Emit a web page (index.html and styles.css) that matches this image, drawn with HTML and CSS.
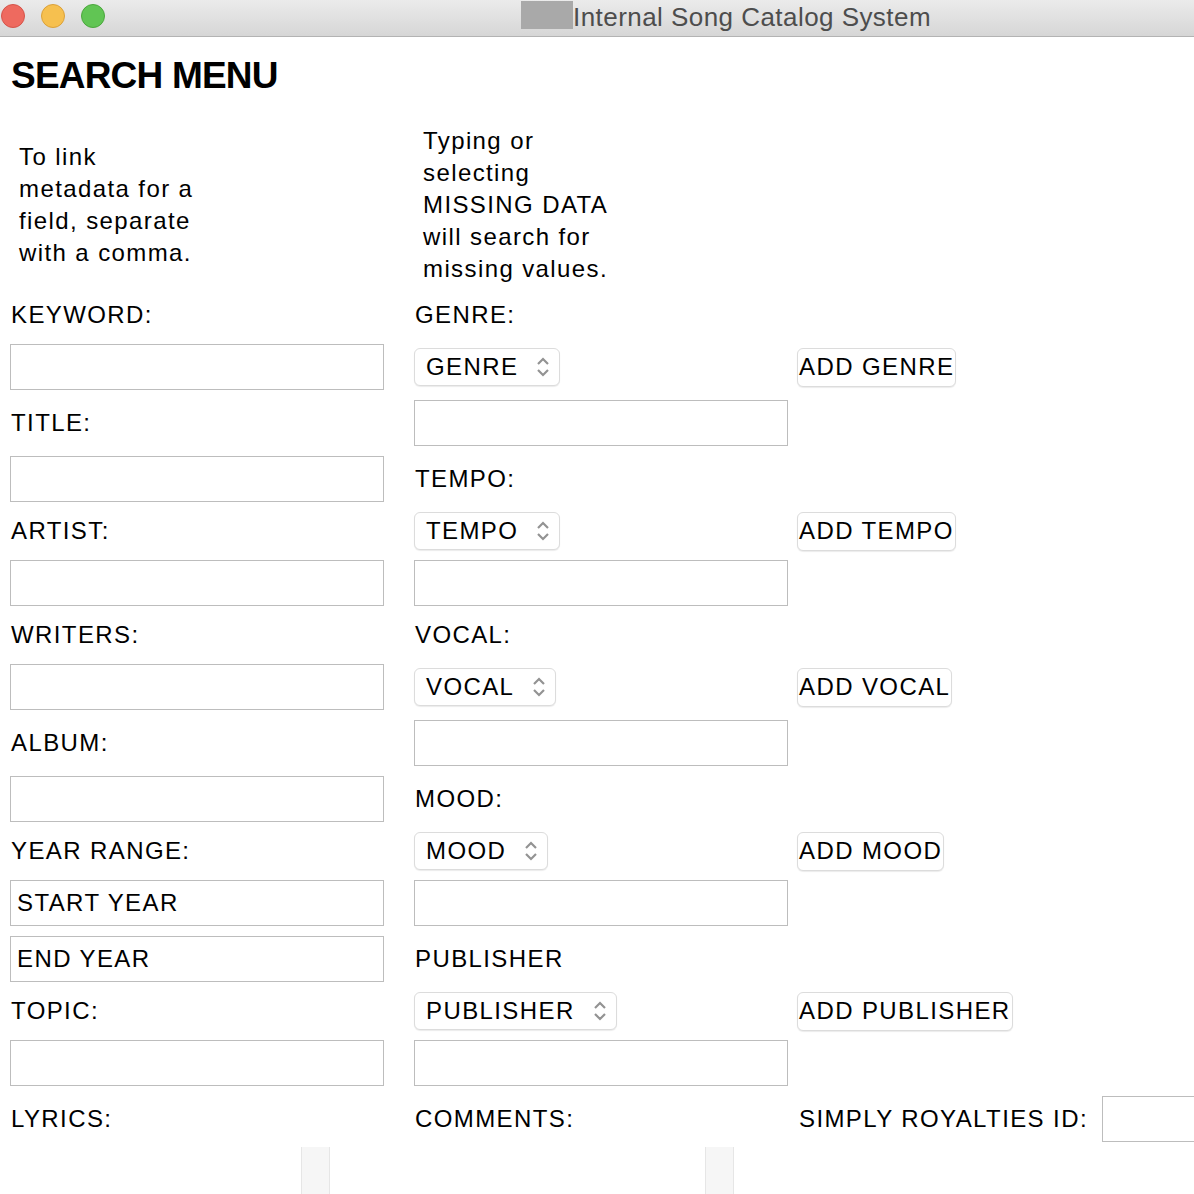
FILE: index.html
```html
<!DOCTYPE html>
<html lang="en">
<head>
<meta charset="utf-8">
<title>Internal Song Catalog System</title>
<link rel="stylesheet" href="styles.css">
</head>
<body>
<header class="titlebar">
  <div class="lights">
    <span class="light red"></span>
    <span class="light yellow"></span>
    <span class="light green"></span>
  </div>
  <div class="wintitle">
    <span class="proxy"></span>
    <span class="wintext">Internal Song Catalog System</span>
  </div>
</header>

<main class="page">
  <h1 class="heading">SEARCH MENU</h1>

  <section class="notes">
    <p class="note note-left">To link metadata for a field, separate with a comma.</p>
    <p class="note">Typing or selecting MISSING DATA will search for missing values.</p>
  </section>

  <section class="form">
    <!-- row A -->
    <div class="label">KEYWORD:</div>
    <div class="label">GENRE:</div>
    <div></div>
    <!-- row B -->
    <input class="field" type="text">
    <div class="cell"><div class="select"><span>GENRE</span><svg class="arrows" viewBox="0 0 12 22" width="12" height="22"><path d="M1 8 L6 3 L11 8 M1 14 L6 19 L11 14"/></svg></div></div>
    <div class="cell"><button class="btn">ADD GENRE</button></div>
    <!-- row C -->
    <div class="label">TITLE:</div>
    <input class="field" type="text">
    <div></div>
    <!-- row D -->
    <input class="field" type="text">
    <div class="label">TEMPO:</div>
    <div></div>
    <!-- row E -->
    <div class="label">ARTIST:</div>
    <div class="cell"><div class="select"><span>TEMPO</span><svg class="arrows" viewBox="0 0 12 22" width="12" height="22"><path d="M1 8 L6 3 L11 8 M1 14 L6 19 L11 14"/></svg></div></div>
    <div class="cell"><button class="btn">ADD TEMPO</button></div>
    <!-- row F -->
    <input class="field" type="text">
    <input class="field" type="text">
    <div></div>
    <!-- row G -->
    <div class="label">WRITERS:</div>
    <div class="label">VOCAL:</div>
    <div></div>
    <!-- row H -->
    <input class="field" type="text">
    <div class="cell"><div class="select"><span>VOCAL</span><svg class="arrows" viewBox="0 0 12 22" width="12" height="22"><path d="M1 8 L6 3 L11 8 M1 14 L6 19 L11 14"/></svg></div></div>
    <div class="cell"><button class="btn">ADD VOCAL</button></div>
    <!-- row I -->
    <div class="label">ALBUM:</div>
    <input class="field" type="text">
    <div></div>
    <!-- row J -->
    <input class="field" type="text">
    <div class="label">MOOD:</div>
    <div></div>
    <!-- row K -->
    <div class="label">YEAR RANGE:</div>
    <div class="cell"><div class="select"><span>MOOD</span><svg class="arrows" viewBox="0 0 12 22" width="12" height="22"><path d="M1 8 L6 3 L11 8 M1 14 L6 19 L11 14"/></svg></div></div>
    <div class="cell"><button class="btn">ADD MOOD</button></div>
    <!-- row L -->
    <input class="field" type="text" value="START YEAR">
    <input class="field" type="text">
    <div></div>
    <!-- row M -->
    <input class="field" type="text" value="END YEAR">
    <div class="label">PUBLISHER</div>
    <div></div>
    <!-- row N -->
    <div class="label">TOPIC:</div>
    <div class="cell"><div class="select"><span>PUBLISHER</span><svg class="arrows" viewBox="0 0 12 22" width="12" height="22"><path d="M1 8 L6 3 L11 8 M1 14 L6 19 L11 14"/></svg></div></div>
    <div class="cell"><button class="btn">ADD PUBLISHER</button></div>
    <!-- row O -->
    <input class="field" type="text">
    <input class="field" type="text">
    <div></div>
    <!-- row P -->
    <div class="label">LYRICS:</div>
    <div class="label">COMMENTS:</div>
    <div class="idcell"><span class="label">SIMPLY ROYALTIES ID:</span><input class="field" type="text"></div>
    <!-- row Q -->
    <div class="area"><div class="track"></div></div>
    <div class="area"><div class="track"></div></div>
    <div></div>
  </section>
</main>
</body>
</html>
```

FILE: styles.css
```css
html, body {
  margin: 0;
  padding: 0;
  overflow: hidden;
  background: #ffffff;
}

body {
  width: 1194px;
  height: 1194px;
  font-family: "Liberation Sans", Arial, sans-serif;
  color: #000;
}

/* ---------- window title bar ---------- */
.titlebar {
  height: 36px;
  display: flex;
  align-items: flex-start;
  background: linear-gradient(#ebebeb, #d6d6d6);
  border-bottom: 1px solid #b3b3b3;
}

.lights {
  display: flex;
  gap: 16px;
  padding-left: 1px;
  padding-top: 4px;
}

.light {
  width: 22px;
  height: 22px;
  border-radius: 50%;
  border: 1px solid;
}
.red { background: #ee6a5f; border-color: #d5544a; }
.yellow { background: #f6c04f; border-color: #dba13a; }
.green { background: #61c554; border-color: #4ba73d; }

.wintitle {
  display: flex;
  align-items: flex-start;
  margin-left: 416px;
}

.proxy {
  width: 52px;
  height: 28px;
  margin-top: 1px;
  background: #a9a9a9;
}

.wintext {
  font-size: 26px;
  line-height: 34px;
  color: #4d4d4d;
  letter-spacing: 0.45px;
}

/* ---------- page ---------- */
.page {
  padding-left: 10px;
}

.heading {
  margin: 18px 0 0 1px;
  font-size: 37px;
  font-weight: bold;
  line-height: 41px;
  letter-spacing: -0.8px;
}

.notes {
  display: grid;
  grid-template-columns: 404px 383px;
  align-items: center;
  margin-top: 29px;
}

.note {
  margin: 0;
  padding-left: 9px;
  width: 200px;
  font-size: 24px;
  line-height: 32px;
  letter-spacing: 1.4px;
}

.note-left {
  width: 190px;
}

/* ---------- form grid ---------- */
.form {
  display: grid;
  grid-template-columns: 404px 383px 397px;
  align-items: center;
  margin-top: 6px;
}

.label {
  height: 48px;
  display: flex;
  align-items: center;
  padding-left: 1px;
  font-size: 24px;
  letter-spacing: 1.4px;
  white-space: nowrap;
}

.cell {
  display: flex;
  align-items: center;
}

.field {
  box-sizing: border-box;
  width: 374px;
  height: 46px;
  margin: 5px 0;
  padding: 0 6px;
  border: 1px solid #bdbdbd;
  border-radius: 0;
  background: #fff;
  font-family: "Liberation Sans", Arial, sans-serif;
  font-size: 24px;
  letter-spacing: 1.4px;
  color: #000;
  outline: none;
}

.select {
  box-sizing: border-box;
  height: 38px;
  display: inline-flex;
  align-items: center;
  padding: 0 10px 0 11px;
  border: 1px solid #dcdcdc;
  border-radius: 6px;
  background: #fff;
  box-shadow: 0 1px 1px rgba(0, 0, 0, 0.08);
  font-size: 24px;
  letter-spacing: 1.4px;
}

.arrows {
  margin-left: 19px;
  fill: none;
  stroke: #939393;
  stroke-width: 2.2;
}

.btn {
  box-sizing: border-box;
  height: 39px;
  margin: 0;
  padding: 0 1px;
  border: 1px solid #dcdcdc;
  border-radius: 6px;
  background: #fff;
  box-shadow: 0 1px 1px rgba(0, 0, 0, 0.08);
  font-family: "Liberation Sans", Arial, sans-serif;
  font-size: 24px;
  letter-spacing: 1.4px;
  color: #000;
  white-space: nowrap;
}

.idcell {
  display: flex;
  align-items: center;
  gap: 14px;
}

.idcell .label {
  padding-left: 2px;
}

.idcell .field {
  flex: none;
}

.area {
  width: 320px;
  height: 60px;
  display: flex;
  justify-content: flex-end;
}

.track {
  box-sizing: border-box;
  width: 29px;
  background: #f6f6f6;
  border-left: 1px solid #e6e6e6;
  border-right: 1px solid #e6e6e6;
}
```
